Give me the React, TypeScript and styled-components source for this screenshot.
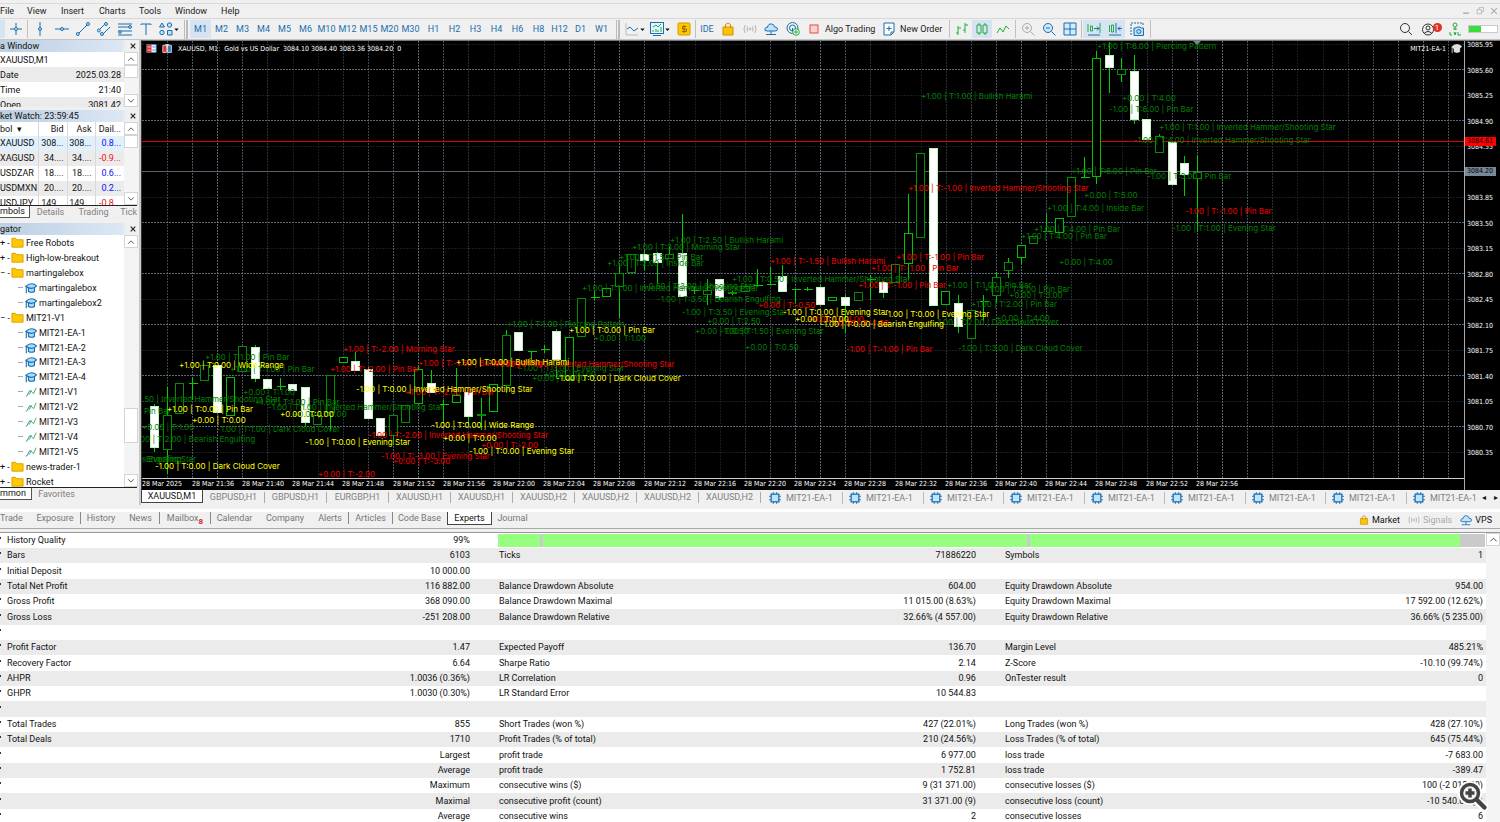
import React from "react";
import styled, { createGlobalStyle, css } from "styled-components";

const ui = `Roboto, "Noto Sans", sans-serif`;
const blue = "#1a6fae";
const green = "#1fae3a";

const Global = createGlobalStyle`
  * { box-sizing: border-box; }
  body { margin: 0; overflow: hidden; background: #f0f0f0; font-family: ${ui}; font-size: 9px; line-height: 12px; color: #111; }
  button { font: inherit; color: inherit; border: 0; padding: 0; margin: 0; background: none; white-space: nowrap; }
  svg { display: block; flex: none; }
`;

const Page = styled.div`display: flex; flex-direction: column; height: 100vh; overflow: hidden;`;
const TopStrip = styled.div`height: 4px; flex: none; border-bottom: 1px solid #dcdad8;`;
const MenuBar = styled.nav`display: flex; align-items: center; height: 15px; flex: none; border-bottom: 1px solid #d9d7d5;`;
const MenuItem = styled.button<{ $w: number }>`width: ${(p) => p.$w}px; flex: none; text-align: left; color: #222;`;
const Spacer = styled.div`flex: 1;`;
const WindowButtons = styled.div`display: flex; gap: 4px; padding-right: 1px;`;

const Toolbar = styled.div`display: flex; align-items: center; height: 21px; flex: none; border-bottom: 1px solid #c5c5c5; overflow: hidden;`;
const Tool = styled.button<{ $w: number; $on?: boolean }>`
  width: ${(p) => p.$w}px; height: 18px; flex: none; display: flex; align-items: center; justify-content: center; gap: 1px;
  color: ${blue}; ${(p) => p.$on && css`background: #d5e3f2;`}
`;
const WideTool = styled(Tool)`justify-content: flex-start; gap: 4px; padding-left: 4px; color: #222;`;
const Sep = styled.div`width: 1px; height: 18px; margin: 0 1px; background: #c0c0c0; flex: none;`;
const DoubleSep = styled.div`width: 4px; height: 19px; margin: 0 2px; border: solid #bbb; border-width: 0 2px 0 1px; flex: none;`;
const TimeGroup = styled.div`display: flex; margin-right: 2px; &:last-of-type { margin-right: 0; }`;
const Badge = styled.span`background: #e03020; color: #fff; border-radius: 5px; width: 9px; height: 9px; line-height: 9px; font-size: 8px; margin: -4px 0 0 -3px;`;
const Battery = styled.div`width: 30px; height: 8px; margin: 0 2px 0 3px; border: 1px solid #c9c9c9; background: linear-gradient(90deg, #3ddc3d 44%, #fff 44%);`;

const Main = styled.div`display: flex; height: 465px; flex: none;`;
const Side = styled.aside`width: 141px; flex: none; display: flex; flex-direction: column; overflow: hidden; border-right: 2px solid #c9c9c9;`;
const PanelTitle = styled.div`
  display: flex; align-items: center; justify-content: space-between; height: 12px; flex: none; padding-right: 2px;
  background: linear-gradient(90deg, #bccfe3, #dce7f4 122px, #f0f0f0 126px);
`;
const PanelBody = styled.div<{ $h: number }>`display: flex; height: ${(p) => p.$h}px; flex: none; overflow: hidden; background: #fff; margin-right: 1px;`;
const Content = styled.div`flex: 1; min-width: 0; overflow: hidden;`;
const Scroll = styled.div`width: 14px; flex: none; display: flex; flex-direction: column; justify-content: space-between; background: #f4f4f4;`;
const ScrollButton = styled.button`width: 14px; height: 13px; flex: none; border: 1px solid #d4d4d4; background: #fff; display: flex; align-items: center; justify-content: center;`;
const Thumb = styled.div<{ $h: number; $top: number }>`height: ${(p) => p.$h}px; margin-top: ${(p) => p.$top}px; margin-bottom: auto; background: #fff; border: 1px solid #d4d4d4;`;
const DataRow = styled.div`display: flex; justify-content: space-between; height: 15px; align-items: center; padding-right: 3px; &:nth-child(even) { background: #ebebeb; }`;
const Watch = styled.table`
  width: 124px; table-layout: fixed; border-collapse: collapse;
  th, td { height: 15px; padding: 0 3px 0 0; font-weight: normal; text-align: right; border-right: 1px solid #d9d9d9; white-space: nowrap; line-height: 11px; }
  th { height: 14px; }
  th:first-child, td:first-child { text-align: left; }
  tbody tr:nth-child(even) { background: #ebebeb; }
  tbody tr:first-child { background: #e0f0fd; }
  td:last-child, th:last-child { border-right: 0; }
`;
const Change = styled.td<{ $down?: boolean }>`color: ${(p) => (p.$down ? "#f01010" : "#1010f0")};`;
const SideTabs = styled.div`display: flex; height: 13px; flex: none; border-top: 1px solid #222; margin: 0 2px 5px 0; overflow: hidden;`;
const SideTab = styled.button<{ $w: number; $on?: boolean }>`
  width: ${(p) => p.$w}px; flex: none; color: #808080; line-height: 11px;
  ${(p) => p.$on && css`color: #111; background: #fff; border-right: 1px solid #555; border-bottom: 1px solid #555; text-align: left;`}
`;
const TreeRow = styled.div<{ $leaf?: boolean }>`
  display: flex; align-items: center; height: 15px; gap: 2px; white-space: nowrap;
  padding-left: ${(p) => (p.$leaf ? 18 : 0)}px; &:nth-child(9n) { height: 14px; }
`;
const Twist = styled.span`width: 9px; flex: none; white-space: nowrap; line-height: 10px;`;
const Dash = styled.span`width: 5px; border-top: 1px dashed #aaa; flex: none;`;

const ChartColumn = styled.section`flex: 1; min-width: 0; display: flex; flex-direction: column;`;
const ChartArea = styled.div`
  display: flex; height: 450px; flex: none; background: #000; border-top: 1px solid #777; border-left: 1px solid #333;
  color: #fff; font-size: 7px; font-family: "DejaVu Sans Condensed", "DejaVu Sans", sans-serif;
`;
const PlotColumn = styled.div`flex: 1; min-width: 0; display: flex; flex-direction: column; position: relative;`;
const Plot = styled.svg`width: 100%; height: 438px; border-bottom: 1px solid #ccc;`;
const PlotText = styled.text`font-family: Inter, "Liberation Sans", sans-serif; font-size: 8px;`;
const TimeAxis = styled.div`display: flex; height: 11px; overflow: hidden; line-height: 11px;`;
const TimeLabel = styled.span`width: 50px; flex: none; white-space: nowrap; &:nth-child(5n) { width: 51px; }`;
const ChartTitle = styled.div`position: absolute; left: 4px; right: 2px; top: 2px; display: flex; align-items: center; gap: 5px; white-space: nowrap; line-height: 10px;`;
const PriceAxis = styled.div`width: 36px; flex: none; position: relative; border-left: 1px solid #aaa;`;
const Prices = styled.div`height: 416px; display: flex; flex-direction: column; justify-content: space-between; line-height: 8px; padding-left: 2px;`;
const PriceTag = styled.div<{ $y: number; $c: string }>`position: absolute; left: 0; width: 31px; height: 9px; line-height: 9px; padding-left: 2px; color: #000; top: ${(p) => p.$y}px; background: ${(p) => p.$c};`;

const ChartTabs = styled.div`display: flex; height: 15px; flex: none; background: #f0f0f0; overflow: hidden; align-items: center;`;
const ChartTab = styled.button<{ $on?: boolean }>`
  width: 62px; height: 11px; line-height: 11px; flex: none; color: #808080; border-right: 1px solid #aaa;
  ${(p) => p.$on && css`height: 13px; margin-bottom: 2px; background: #fff; color: #111; border: 1px solid #444; border-top: 0;`}
`;
const EaTabs = styled.div`display: flex; flex: 1; min-width: 0; overflow: hidden; padding-left: 2px;`;
const EaTab = styled.button`width: 80px; height: 12px; flex: none; display: flex; align-items: center; gap: 5px; color: #808080; padding-left: 6px; border-right: 1px solid #bbb; &:nth-child(even) { width: 81px; }`;
const Arrows = styled.div`width: 20px; display: flex; justify-content: space-between; font-size: 8px; padding: 0 2px; flex: none;`;

const Gutter = styled.div`height: 7px; flex: none; border-bottom: 3px solid #fff;`;
const BoxTabs = styled.div`display: flex; height: 17px; flex: none; align-items: flex-start; border-bottom: 1px solid #aaa; margin-bottom: 3px;`;
const BoxTab = styled.button<{ $w: number; $on?: boolean; $line?: boolean }>`
  width: ${(p) => p.$w}px; flex: none; height: 12px; color: #777; border-right: 1px solid ${(p) => (p.$line ? "#888" : "transparent")};
  sub { color: #e02020; font-size: 8px; font-weight: bold; line-height: 0; }
  &:first-child { text-align: left; }
  ${(p) => p.$on && css`height: 13px; background: #fff; color: #111; border: 1px solid #444; border-top: 0;`}
`;
const Service = styled.button<{ $off?: boolean }>`display: flex; align-items: center; gap: 3px; height: 15px; margin-right: 8px; color: ${(p) => (p.$off ? "#aaa" : "#111")};`;
const Report = styled.div`flex: 1; min-height: 0; display: flex; overflow: hidden; border-top: 1px solid #999; background: #fff;`;
const ReportScroll = styled.div`width: 14px; flex: none; background: #f4f4f4;`;
const ReportBody = styled.div`flex: 1; min-width: 0;`;
const ReportTable = styled.table`
  width: 100%; table-layout: fixed; border-collapse: collapse;
  td { height: 15px; padding: 0; line-height: 13px; white-space: nowrap; }
  tr:nth-child(3n) td { height: 16px; }
  tr:nth-child(even) { background: #ebebeb; }
`;
const Name = styled.td`&& { padding-left: 19px; } &&:first-child { padding-left: 0; }`;
const Value = styled.td`&& { text-align: right; padding-right: 10px; } &&:last-child { padding-right: 3px; }`;
const Tick = styled.span`display: inline-block; width: 1px; height: 2px; margin: 0 6px 4px 0; background: #333;`;
const Quality = styled.div`display: flex; gap: 3px; height: 13px; margin: 0 1px 0 18px; background: #cacaca;`;
const QualityPart = styled.div<{ $grow: number; $empty?: boolean }>`flex: ${(p) => p.$grow} 0 0; background: ${(p) => (p.$empty ? "#cacaca" : "#96ff80")};`;
const Magnifier = styled.button`position: fixed; right: 12px; bottom: 11px;`;

/* Small line icons drawn on a 14px grid. */
const shapes: Record<string, React.ReactNode> = {
  cross: <><path d="M7 1v12M1 7h12" /><circle cx="7" cy="7" r="1.5" fill="#f0f0f0" /></>,
  vline: <><path d="M7 0v14" /><circle cx="7" cy="7" r="1.5" fill="#bfe0fb" /></>,
  hline: <><path d="M0 7h14" /><circle cx="7" cy="7" r="1.5" fill="#bfe0fb" /></>,
  trend: <><path d="M1 13 12 2" /><circle cx="1.8" cy="12" r="1.5" fill="#bfe0fb" /><circle cx="12" cy="2" r="1.5" fill="#bfe0fb" /></>,
  channel: <><path d="M1 9 9 1M5 13l8-8" /><circle cx="1.8" cy="8.5" r="1.5" fill="#bfe0fb" /><circle cx="9" cy="2" r="1.5" fill="#bfe0fb" /><circle cx="5" cy="12" r="1.5" fill="#bfe0fb" /></>,
  fibo: <><path d="M0 2h14M0 5h14M0 9h14M0 13h14" /><circle cx="12" cy="5" r="1.4" fill="#bfe0fb" /><circle cx="2" cy="10" r="1.4" fill="#bfe0fb" /></>,
  text: <path d="M2 3V2h10v1M7 2v11" />,
  shapes: <g fill="#bfe0fb"><path d="M3 1 5.500 5H.5Z" /><circle cx="10.500" cy="3" r="2.200" /><circle cx="3" cy="10.500" r="2.200" /><path d="M8.500 8.500h4.500v4.500H8.500z" /></g>,
  line: <><path d="M1 1v12h12" stroke="#bbb" /><path d="m2 7 3-2 4 4 4-3" /></>,
  indicator: <><rect x=".5" y=".5" width="13" height="11" fill="#e6f4ff" /><path d="M3 13.500h8" /><path d="m3 5 3-2 2 2 3-3M3 10V8M6 10V7M8 10V8M11 10V5" stroke={green} /></>,
  dollar: <><rect x="1" y="1" width="12" height="12" rx="1" fill="#ffc800" stroke="#d79a00" /><path d="M9.500 4.500h-4v2.500h4V9.500h-4.500M7 3v8" stroke="#9a6500" /></>,
  bag: <><path d="M2 5h10v8H2z" fill="#ffc400" stroke="#d09000" /><path d="M4.500 6V2.500q2.500-3 5 0V6" stroke="#c98a00" /></>,
  signal: <g stroke="#b5b5b5"><path d="M2 3q-2 4 0 8M4.500 4.500q-1 2.500 0 5M12 3q2 4 0 8M9.500 4.500q1 2.500 0 5" /><circle cx="7" cy="7" r="1" /></g>,
  cloud: <><path d="M3 9Q0 9 1 6.500 2 5 3.500 5.500 4 1.500 7.500 2 10 2 10.500 5q3 0 3 2T11 9Z" fill="#bfe4ff" /><path d="M7 9v3M2 12.500h10" /></>,
  globe: <><circle cx="6.500" cy="6" r="5.500" /><circle cx="6.500" cy="6" r="3" /><path d="M6.500 6v4" /><circle cx="10" cy="10" r="3.300" fill="#fff" stroke={green} /><path d="M10 8v4M8 10h4" stroke={green} /></>,
  stop: <rect x="3" y="3" width="8" height="8" fill="#ffd0cc" stroke="#d9534a" />,
  order: <><path d="M2 1h10v9l-3 3H2Z" fill="#fff" /><path d="M7 4v5M4.500 6.500h5M9 13v-3h3" /></>,
  bars: <path d="M3 4v9M1 11h2M3 6h3M10 1v10M8 8h2M10 3h3" stroke={green} />,
  candles: <path d="M2 3h4v8H2zM8 3h4v8H8zM4 1v2M4 11v2M10 1v2M10 11v2" stroke={green} />,
  zigzag: <path d="m1 11 3-5 3 4 3-6 3 3" stroke={green} />,
  zoomIn: <g stroke="#aaa"><circle cx="6" cy="6" r="4.500" /><path d="M9.500 9.500 13.500 13.500M4 6h4M6 4v4" /></g>,
  zoomOut: <><circle cx="6" cy="6" r="4.500" fill="#cfe8ff" /><path d="M9.500 9.500 13.500 13.500M4 6h4" /></>,
  tiles: <path d="M1 1h12v12H1zM7 1v12M1 7h12" fill="#d5ecff" />,
  shift: <><path d="M1 2v8M3.500 4v5h2V4h-2M13 1v10" stroke={green} /><path d="M7 6.500h5M10 4.500l2 2-2 2M1 13h12" /></>,
  scroll: <><path d="M1.500 3v7M3.500 3v7h2V3h-2" stroke={green} /><path d="M8 1v10M14 6.500h-4M12 4.500l-2 2 2 2M1 13h12" /></>,
  camera: <><path d="M1 13V1h12v3" strokeDasharray="2 1" /><path d="M4 6h2l1-1h3l1 1h2.500v7.500H4z" fill="#bfe0fb" /><circle cx="8.800" cy="9.500" r="2" /></>,
  search: <g stroke="#333"><circle cx="6" cy="6" r="4.500" /><path d="M9.500 9.500 13 13" /></g>,
  user: <g stroke="#333"><circle cx="7" cy="7.500" r="5.500" /><circle cx="7" cy="6" r="2" /><path d="M3 11.500q4-4 8 0" /></g>,
  level: <g stroke={green}><circle cx="7" cy="3" r="2" /><path d="M7 5v3M5 7h4M2 10v3h2M6 10l1 3 1-3M10 10v3h3" /></g>,
  folder: <path d="M1 2.500h4l1 1.500h7v8H1z" fill="#ffc800" stroke="#dba000" />,
  hat: <><path d="M4 6v5q4 2 7 0V6" fill="#a9dbff" strokeWidth="1.300" /><path d="M1 5q3-3 6.500-3T13.500 4.500Q11 7.500 7.500 7.500T1 5Z" fill="#a9dbff" strokeWidth="1.300" /><path d="M1.500 5v8" strokeWidth="1.300" /></>,
  hatWhite: <><path d="M4 6v5q4 2 7 0V6" fill="#ddd" stroke="#eee" /><path d="M1 5q3-3 6.500-3T13.500 4.500Q11 7.500 7.500 7.500T1 5Z" fill="#ddd" stroke="#eee" /><path d="M1.500 5v8" stroke="#ddd" /></>,
  wave: <><path d="M1 12q2 0 3-4t4-2" /><path d="m5 10 2-4 3 3 3-7" stroke={green} /></>,
  chip: <><path d="M5 0v14M9 0v14M0 5h14M0 9h14" /><rect x="2.500" y="2.500" width="9" height="9" fill="#bfe4ff" strokeWidth="1.500" /></>,
  book: <><path d="M1 2h12v10H1z" fill="#fff" stroke="#3b7fc4" /><path d="M1 2h6v10H1z" fill="#d33" stroke="none" /><path d="M2 5h4M2 9h4" stroke="#fff" /><path d="M8 5h4M8 9h4" /></>,
  pad: <><path d="M1 3h5v9H1z" fill="#d33" stroke="#eee" /><path d="M7 3h5v9H7z" fill="#3b7fc4" stroke="#eee" /><path d="M4 2h5M6.500 2v4" stroke="#fff" /></>,
  min: <path d="M3 10h8" stroke="#aaa" strokeWidth="2" />,
  restore: <path d="M3 5h6v6H3zM6 5V2h6v6H9" stroke="#aaa" />,
  close: <path d="m3 3 8 8M11 3l-8 8" stroke="#aaa" strokeWidth="1.500" />,
  x: <path d="m3 3 8 8M11 3l-8 8" stroke="#222" strokeWidth="2" />,
  up: <path d="m2 10 5-5 5 5" stroke="#444" strokeWidth="1.500" />,
  down: <path d="m2 4 5 5 5-5" stroke="#444" strokeWidth="1.500" />,
  caret: <path d="M1 4h12L7 11Z" fill="#111" stroke="none" />,
};
const Icon = ({ n, s = 14 }: { n: string; s?: number }) => (
  <svg width={s} height={s} viewBox="0 0 14 14" fill="none" stroke={blue} strokeWidth="1" aria-hidden="true">{shapes[n]}</svg>
);

const FIRST = 154.7;
const STEP = 12.56;
/* body top, body bottom, wick top, wick bottom, 1 when the body is filled */
const candles: number[][] = [
  [406, 448, 404, 452, 1], [415, 450, 387, 474, 0], [383, 414, 383, 414, 0], [383, 383, 377, 400, 0], [365, 381, 365, 381, 0],
  [365, 413, 365, 413, 1], [377, 416, 377, 416, 0], [346, 372, 346, 372, 0], [347, 379, 345, 382, 1], [379, 389, 379, 389, 1],
  [386, 386, 378, 390, 0], [384, 391, 384, 391, 1], [387, 423, 387, 426, 1], [415, 425, 415, 425, 0], [375, 413, 375, 430, 0],
  [357, 363, 357, 363, 0], [361, 371, 352, 371, 1], [369, 419, 367, 419, 1], [418, 436, 418, 436, 1], [415, 436, 415, 445, 0],
  [405, 423, 405, 423, 0], [369, 404, 365, 404, 0], [383, 393, 370, 393, 1], [404, 404, 400, 423, 0], [395, 403, 368, 403, 0],
  [392, 417, 392, 425, 1], [414, 416, 398, 430, 0], [384, 412, 384, 412, 0], [335, 386, 330, 393, 0], [332, 351, 332, 351, 1],
  [351, 351, 351, 363, 0], [349, 349, 345, 353, 0], [331, 360, 329, 378, 1], [337, 380, 337, 380, 0], [298, 337, 298, 337, 0],
  [297, 297, 290, 300, 0], [288, 297, 288, 297, 0], [273, 287, 265, 317, 0], [254, 273, 254, 273, 0], [254, 261, 250, 270, 1],
  [253, 263, 252, 283, 1], [254, 259, 246, 259, 0], [253, 297, 214, 297, 1], [290, 290, 287, 294, 0], [290, 295, 279, 305, 0],
  [279, 298, 279, 300, 1], [292, 294, 291, 295, 0], [286, 292, 286, 292, 0], [285, 285, 269, 285, 0], [284, 284, 267, 284, 0],
  [276, 292, 265, 292, 1], [289, 289, 289, 303, 0], [289, 289, 287, 291, 0], [287, 305, 285, 305, 1], [297, 301, 297, 301, 0],
  [297, 306, 295, 333, 1], [292, 301, 292, 301, 0], [279, 279, 275, 300, 0], [282, 293, 281, 298, 1], [264, 283, 264, 283, 0],
  [233, 264, 194, 280, 0], [153, 238, 153, 238, 0], [148, 306, 148, 306, 1], [291, 305, 291, 305, 0], [303, 327, 295, 333, 1],
  [310, 339, 310, 339, 0], [301, 301, 295, 321, 0], [277, 296, 272, 302, 0], [262, 271, 258, 278, 0], [245, 258, 245, 264, 0],
  [236, 244, 236, 244, 0], [231, 231, 214, 231, 0], [218, 233, 218, 233, 0], [177, 217, 177, 217, 0], [177, 177, 157, 177, 0],
  [58, 177, 51, 184, 0], [55, 68, 42, 93, 1], [69, 75, 58, 82, 0], [71, 120, 55, 124, 1], [119, 140, 119, 140, 1],
  [136, 153, 134, 153, 0], [142, 185, 142, 185, 1], [163, 175, 156, 196, 1], [172, 179, 155, 232, 0],
];

const G = "#008000", R = "#f00000", Y = "#ffff00";
const IH = "Inverted Hammer/Shooting Star";
const notes: [number, number, string, string][] = [
  [1097, 46, G, "+1.00 | T:6.00 | Piercing Pattern"], [921, 96, G, "+1.00 | T:1.00 | Bullish Harami"], [1122, 98, G, "+0.00 | T:4.00"],
  [1109, 109, G, "-1.00 | T:6.00 | Pin Bar"], [1159, 127, G, "+1.00 | T:1.00 | " + IH], [1134, 140, G, "-1.00 | T:4.00 | " + IH],
  [1071, 171, G, "+1.00 | T:6.00 | Pin Bar"], [1147, 176, G, "-1.00 | T:3.00 | Pin Bar"], [1084, 195, G, "+0.00 | T:5.00"],
  [1047, 208, G, "+1.00 | T:4.00 | Inside Bar"], [1172, 228, G, "-1.00 | T:1.00 | Evening Star"], [1034, 229, G, "+1.00 | T:4.00 | Pin Bar"],
  [1021, 236, G, "+1.00 | T:4.00 | Pin Bar"], [1059, 262, G, "+0.00 | T:4.00"], [947, 285, G, "+1.00 | T:1.00 | Pin Bar"],
  [984, 289, G, "+1.00 | T:3.00 | Pin Bar"], [1009, 295, G, "+0.00 | T:3.00"], [971, 304, G, "+1.00 | T:2.00 | Pin Bar"],
  [996, 318, G, "+0.00 | T:4.00"], [934, 322, G, "-1.00 | T:2.00 | Dark Cloud Cover"], [958, 348, G, "-1.00 | T:3.00 | Dark Cloud Cover"],
  [670, 240, G, "+1.00 | T:2.50 | Bullish Harami"], [632, 247, G, "+1.00 | T:3.00 | Morning Star"], [619, 257, G, "+1.00 | T:1.50 | Pin Bar"],
  [607, 263, G, "+1.00 | T:2.00 | Inside Bar"], [582, 288, G, "+1.00 | T:1.00 | " + IH], [645, 286, G, "-0.50 | T:3.00 | Shooting Star"],
  [732, 279, G, "+1.00 | T:0.50 | " + IH], [657, 299, G, "-1.00 | T:3.50 | Bearish Engulfing"], [682, 312, G, "-1.00 | T:3.50 | Evening Star"],
  [707, 321, G, "+0.00 | T:2.50"], [695, 331, G, "+0.00 | T:0.50"], [720, 331, G, "-1.00 | T:1.50 | Evening Star"],
  [745, 347, G, "+0.00 | T:0.50"], [507, 324, G, "+1.00 | T:1.00 | Piercing Pattern"], [594, 338, G, "+0.00 | T:1.00"],
  [519, 368, G, "-1.00 | T:3.00 | Evening Star"], [544, 374, G, "+0.00 | T:1.00"], [532, 378, G, "+0.00 | T:2.00"],
  [205, 357, G, "+1.00 | T:1.00 | Pin Bar"], [230, 369, G, "+1.00 | T:1.00 | Pin Bar"], [243, 392, G, "+0.00 | T:1.00"],
  [255, 402, G, "+1.00 | T:1.00 | Pin Bar"], [142, 399, G, ".50 | " + IH], [268, 407, G, "-1.00 | T:1.00 | " + IH],
  [293, 414, G, "+0.00 | T:0.00"], [144, 411, G, "Pin Bar"], [142, 427, G, "+0.00 | T:1.00"], [217, 429, G, "-1.00 | T:1.00 | Dark Cloud Cover"],
  [131, 439, G, "-1.00 | T:2.00 | Bearish Engulfing"], [142, 459, G, "s Evening Star"], [146, 459, G, "Engulfing"],
  [908, 188, R, "+1.00 | T:-1.00 | " + IH], [1185, 211, R, "-1.00 | T:-1.00 | Pin Bar"], [896, 257, R, "+1.00 | T:-1.00 | Pin Bar"],
  [871, 268, R, "+1.00 | T:-1.00 | Pin Bar"], [858, 285, R, "+1.00 | T:-1.00 | Pin Bar"], [770, 261, R, "+1.00 | T:-1.50 | Bullish Harami"],
  [758, 305, R, "+0.00 | T:-0.50"], [846, 349, R, "-1.00 | T:-1.00 | Pin Bar"], [343, 349, R, "+1.00 | T:-2.00 | Morning Star"],
  [330, 369, R, "+1.00 | T:-2.00 | Pin Bar"], [418, 363, R, "+1.00 | T:-1.50 | Bullish Engulfing"], [494, 364, R, "+1.00 | T:-1.00 | " + IH],
  [405, 392, R, "+1.00 | T:-2.00 | Pin Bar"], [368, 435, R, "-1.00 | T:-2.00 | " + IH], [381, 456, R, "-1.00 | T:-3.00 | Evening Star"],
  [393, 461, R, "+0.00 | T:-3.00"], [481, 445, R, "+0.00 | T:-2.00"], [318, 474, R, "+0.00 | T:-2.00"], [808, 319, R, "+0.00 | T:-1.00"], [833, 323, R, "+0.00 | T:-1.00"],
  [179, 365, Y, "+1.00 | T:0.00 | Wide Range"], [167, 409, Y, "+1.00 | T:0.00 | Pin Bar"], [192, 420, Y, "+0.00 | T:0.00"],
  [280, 414, Y, "+0.00 | T:0.00"], [155, 466, Y, "-1.00 | T:0.00 | Dark Cloud Cover"], [305, 442, Y, "-1.00 | T:0.00 | Evening Star"],
  [356, 389, Y, "-1.00 | T:0.00 | " + IH], [456, 362, Y, "+1.00 | T:0.00 | Bullish Harami"], [431, 425, Y, "-1.00 | T:0.00 | Wide Range"],
  [443, 438, Y, "+0.00 | T:0.00"], [469, 451, Y, "-1.00 | T:0.00 | Evening Star"], [569, 330, Y, "+1.00 | T:0.00 | Pin Bar"],
  [556, 378, Y, "-1.00 | T:0.00 | Dark Cloud Cover"], [783, 312, Y, "-1.00 | T:0.00 | Evening Star"], [795, 319, Y, "+0.00 | T:0.00"],
  [820, 324, Y, "-1.00 | T:0.00 | Bearish Engulfing"], [884, 314, Y, "-1.00 | T:0.00 | Evening Star"],
];
const fade = [0.5, 0.65, 0.75, 0.6, 0.35, 0.2, 0.2, 0.35];

function PricePlot() {
  return (
    <Plot role="img" aria-label="Gold vs US Dollar candles">
      <g transform="translate(-142 -41)">
        <g stroke="#778899" strokeDasharray="2 1" shapeRendering="crispEdges">
          {Array.from({ length: 52 }, (_, i) => <path key={i} d={`M${Math.round(167 + i * 25.12) + 0.5} 41V480`} opacity={fade[i % 8]} />)}
          {Array.from({ length: 17 }, (_, i) => <path key={i} d={`M142 ${Math.round(43.5 + i * 25.5) + 0.5}H1466`} opacity={i % 2 ? 0.75 : 0.2} />)}
        </g>
        <path d="M142 141.500H1466" stroke="#e00000" />
        <path d="M142 171.500H1466" stroke="#56606c" />
        <path d="M1193 41h8l-4 4z" fill="#778899" />
        <g stroke="#00d000" shapeRendering="crispEdges">
          {candles.map(([a, b, w, v, f], i) => {
            const x = Math.round(FIRST + i * STEP - 0.5) + 0.5;
            return (
              <g key={i}>
                <path d={`M${x} ${w}V${a}M${x} ${b}V${v}`} />
                {b - a < 2 ? <path d={`M${x - 4} ${a + 0.5}h9`} /> : <rect x={x - 4} y={a + 0.5} width="8" height={b - a - 1} fill={f ? "#fff" : "#000"} stroke={f ? "#b8f5b8" : i % 3 ? "#009000" : "#00c000"} />}
              </g>
            );
          })}
        </g>
        {notes.map(([x, y, c, t], i) => <PlotText key={i} x={x} y={y + 3} fill={c}>{t}</PlotText>)}
      </g>
    </Plot>
  );
}

const times = ["2025", ...Array.from({ length: 21 }, (_, i) => { const m = 36 + i * 4; return `${m < 60 ? 21 : 22}:${String(m % 60).padStart(2, "0")}`; })];
const prices = Array.from({ length: 17 }, (_, i) => (3085.95 - i * 0.35).toFixed(2));

const left: [string, number][] = [["vline", 22], ["hline", 21], ["trend", 21], ["channel", 21], ["fibo", 22], ["text", 19]];
const minutes = ["M1", "M2", "M3", "M4", "M5", "M6", "M10", "M12", "M15", "M20", "M30"];
const hours = ["H1", "H2", "H3", "H4", "H6", "H8", "H12", "D1", "W1"];
const menus: [string, number][] = [["File", 27], ["View", 34], ["Insert", 38], ["Charts", 40], ["Tools", 36], ["Window", 46], ["Help", 30]];
const watch: [string, string, string, string, boolean][] = [
  ["XAUUSD", "308...", "308...", "0.8...", false], ["XAGUSD", "34....", "34....", "-0.9...", true], ["USDZAR", "18....", "18....", "0.6...", false],
  ["USDMXN", "20....", "20....", "0.2...", false], ["USDJPY", "149...", "149...", "-0.8...", true],
];
const tree: [string, string][] = [
  ["+", "Free Robots"], ["+", "High-low-breakout"], ["−", "martingalebox"], ["hat", "martingalebox"], ["hat", "martingalebox2"], ["−", "MIT21-V1"],
  ["hat", "MIT21-EA-1"], ["hat", "MIT21-EA-2"], ["hat", "MIT21-EA-3"], ["hat", "MIT21-EA-4"],
  ["wave", "MIT21-V1"], ["wave", "MIT21-V2"], ["wave", "MIT21-V3"], ["wave", "MIT21-V4"], ["wave", "MIT21-V5"], ["+", "news-trader-1"], ["+", "Rocket"],
];
const symbols = ["GBPUSD,H1", "GBPUSD,H1", "EURGBP,H1", "XAUUSD,H1", "XAUUSD,H1", "XAUUSD,H2", "XAUUSD,H2", "XAUUSD,H2", "XAUUSD,H2"];
const boxTabs: [string, number, boolean][] = [
  ["Trade", 30, false], ["Exposure", 51, true], ["History", 41, false], ["News", 38, true], ["Mailbox", 51, true], ["Calendar", 48, false],
  ["Company", 53, false], ["Alerts", 37, true], ["Articles", 44, true], ["Code Base", 54, false], ["Experts", 45, false], ["Journal", 42, false],
];
const report: string[][] = [
  ["Bars", "6103", "Ticks", "71886220", "Symbols", "1"],
  ["Initial Deposit", "10 000.00", "", "", "", ""],
  ["Total Net Profit", "116 882.00", "Balance Drawdown Absolute", "604.00", "Equity Drawdown Absolute", "954.00"],
  ["Gross Profit", "368 090.00", "Balance Drawdown Maximal", "11 015.00 (8.63%)", "Equity Drawdown Maximal", "17 592.00 (12.62%)"],
  ["Gross Loss", "-251 208.00", "Balance Drawdown Relative", "32.66% (4 557.00)", "Equity Drawdown Relative", "36.66% (5 235.00)"],
  ["", "", "", "", "", ""],
  ["Profit Factor", "1.47", "Expected Payoff", "136.70", "Margin Level", "485.21%"],
  ["Recovery Factor", "6.64", "Sharpe Ratio", "2.14", "Z-Score", "-10.10 (99.74%)"],
  ["AHPR", "1.0036 (0.36%)", "LR Correlation", "0.96", "OnTester result", "0"],
  ["GHPR", "1.0030 (0.30%)", "LR Standard Error", "10 544.83", "", ""],
  ["", "", "", "", "", ""],
  ["Total Trades", "855", "Short Trades (won %)", "427 (22.01%)", "Long Trades (won %)", "428 (27.10%)"],
  ["Total Deals", "1710", "Profit Trades (% of total)", "210 (24.56%)", "Loss Trades (% of total)", "645 (75.44%)"],
  ["", "Largest", "profit trade", "6 977.00", "loss trade", "-7 683.00"],
  ["", "Average", "profit trade", "1 752.81", "loss trade", "-389.47"],
  ["", "Maximum", "consecutive wins ($)", "9 (31 371.00)", "consecutive losses ($)", "100 (-2 015.00)"],
  ["", "Maximal", "consecutive profit (count)", "31 371.00 (9)", "consecutive loss (count)", "-10 540.00 (8)"],
  ["", "Average", "consecutive wins", "2", "consecutive losses", "6"],
];
const columns = ["14%", "18.3%", "17.05%", "17%", "17%", "16.65%"];

const IconTool = ({ n, w, on, label, caret }: { n: string; w: number; on?: boolean; label?: string; caret?: boolean }) => (
  <Tool $w={w} $on={on} aria-label={label ?? n}><Icon n={n} />{caret && <Icon n="caret" s={5} />}</Tool>
);
const Title = ({ children }: { children: React.ReactNode }) => <PanelTitle><span>{children}</span><button aria-label="Close panel"><Icon n="x" s={8} /></button></PanelTitle>;
const ScrollBar = ({ h, top = 0 }: { h: number; top?: number }) => (
  <Scroll><ScrollButton aria-label="Scroll up"><Icon n="up" s={8} /></ScrollButton><Thumb $h={h} $top={top} /><ScrollButton aria-label="Scroll down"><Icon n="down" s={8} /></ScrollButton></Scroll>
);

export default function App() {
  return (
    <Page>
      <Global />
      <TopStrip />
      <MenuBar>
        {menus.map(([m, w]) => <MenuItem key={m} $w={w}>{m}</MenuItem>)}
        <Spacer />
        <WindowButtons>{["min", "restore", "close"].map((n) => <button key={n} aria-label={n}><Icon n={n} s={10} /></button>)}</WindowButtons>
      </MenuBar>
      <Toolbar>
        <Tool $w={5} $on aria-label="Cursor" />
        <IconTool n="cross" w={21} />
        <Sep />
        {left.map(([n, w]) => <IconTool key={n} n={n} w={w} />)}
        <IconTool n="shapes" w={27} caret />
        <DoubleSep />
        <TimeGroup>{minutes.map((m, i) => <Tool key={m} $w={21} $on={i === 0}>{m}</Tool>)}</TimeGroup>
        <TimeGroup>{hours.map((m) => <Tool key={m} $w={21}>{m}</Tool>)}</TimeGroup>
        <DoubleSep />
        <IconTool n="line" w={25} caret />
        <IconTool n="indicator" w={26} caret />
        <IconTool n="dollar" w={21} />
        <Sep />
        <Tool $w={20}>IDE</Tool>
        <IconTool n="bag" w={22} />
        <IconTool n="signal" w={21} />
        <IconTool n="cloud" w={22} />
        <IconTool n="globe" w={21} />
        <WideTool $w={75}><Icon n="stop" />Algo Trading</WideTool>
        <WideTool $w={70}><Icon n="order" />New Order</WideTool>
        <Sep />
        <IconTool n="bars" w={21} />
        <IconTool n="candles" w={20} on />
        <IconTool n="zigzag" w={22} />
        <Sep />
        <IconTool n="zoomIn" w={21} />
        <IconTool n="zoomOut" w={21} />
        <IconTool n="tiles" w={21} />
        <Sep />
        <IconTool n="shift" w={21} on />
        <IconTool n="scroll" w={21} on />
        <IconTool n="camera" w={24} />
        <Sep />
        <Spacer />
        <IconTool n="search" w={22} />
        <Tool $w={28} aria-label="Account"><Icon n="user" /><Badge>1</Badge></Tool>
        <IconTool n="level" w={20} />
        <Battery />
      </Toolbar>

      <Main>
        <Side>
          <Title>a Window</Title>
          <PanelBody $h={55}>
            <Content>
              <DataRow>XAUUSD,M1</DataRow>
              <DataRow><span>Date</span><span>2025.03.28</span></DataRow>
              <DataRow><span>Time</span><span>21:40</span></DataRow>
              <DataRow><span>Open</span><span>3081.42</span></DataRow>
            </Content>
            <ScrollBar h={13} />
          </PanelBody>
          <Spacer />
          <Title>ket Watch: 23:59:45</Title>
          <PanelBody $h={83}>
            <Content>
              <Watch>
                <colgroup><col width="38" /><col width="29" /><col width="28" /><col width="29" /></colgroup>
                <thead><tr><th>bol &nbsp;▾</th><th>Bid</th><th>Ask</th><th>Dail...</th></tr></thead>
                <tbody>{watch.map(([s, b, a, d, down]) => <tr key={s}><td>{s}</td><td>{b}</td><td>{a}</td><Change $down={down}>{d}</Change></tr>)}</tbody>
              </Watch>
            </Content>
            <ScrollBar h={13} />
          </PanelBody>
          <SideTabs><SideTab $w={30} $on>mbols</SideTab><SideTab $w={41}>Details</SideTab><SideTab $w={45}>Trading</SideTab><SideTab $w={30}>Ticks</SideTab></SideTabs>
          <Title>gator</Title>
          <PanelBody $h={252}>
            <Content>
              {tree.map(([k, t], i) => k.length > 1
                ? <TreeRow key={i} $leaf><Dash /><Icon n={k} s={12} />{t}</TreeRow>
                : <TreeRow key={i}><Twist>{k} -</Twist><Icon n="folder" s={13} />{t}</TreeRow>)}
            </Content>
            <ScrollBar h={35} top={160} />
          </PanelBody>
          <SideTabs><SideTab $w={32} $on>mmon</SideTab><SideTab $w={49}>Favorites</SideTab></SideTabs>
        </Side>

        <ChartColumn>
          <ChartArea>
            <PlotColumn>
              <PricePlot />
              <TimeAxis>{times.map((t) => <TimeLabel key={t}>28 Mar {t}</TimeLabel>)}</TimeAxis>
              <ChartTitle><Icon n="book" s={11} /><Icon n="pad" s={11} /><span>XAUUSD, M1:&nbsp; Gold vs US Dollar&nbsp; 3084.10 3084.40 3083.36 3084.20&nbsp; 0</span><Spacer /><span>MIT21-EA-1</span><Icon n="hatWhite" s={11} /></ChartTitle>
            </PlotColumn>
            <PriceAxis>
              <Prices>{prices.map((p) => <span key={p}>{p}</span>)}</Prices>
              <PriceTag $y={96} $c="#ff0000">3084.61</PriceTag>
              <PriceTag $y={126} $c="#778899">3084.20</PriceTag>
            </PriceAxis>
          </ChartArea>
          <ChartTabs>
            <ChartTab $on>XAUUSD,M1</ChartTab>
            {symbols.map((s, i) => <ChartTab key={i}>{s}</ChartTab>)}
            <EaTabs>{Array.from({ length: 9 }, (_, i) => <EaTab key={i}><Icon n="chip" s={12} />MIT21-EA-1</EaTab>)}</EaTabs>
            <Arrows><span>◂</span><span>▸</span></Arrows>
          </ChartTabs>
        </ChartColumn>
      </Main>

      <Gutter />
      <BoxTabs>
        {boxTabs.map(([t, w, line]) => <BoxTab key={t} $w={w} $line={line} $on={t === "Experts"}>{t}{t === "Mailbox" && <sub>8</sub>}</BoxTab>)}
        <Spacer />
        <Service><Icon n="bag" s={10} />Market</Service>
        <Service $off><Icon n="signal" s={12} />Signals</Service>
        <Service><Icon n="cloud" s={12} />VPS</Service>
      </BoxTabs>
      <Report>
        <ReportBody>
          <ReportTable>
            <colgroup>{columns.map((w, i) => <col key={i} width={w} />)}</colgroup>
            <tbody>
              <tr>
                <Name><Tick />History Quality</Name><Value>99%</Value>
                <td colSpan={4}><Quality><QualityPart $grow={42} /><QualityPart $grow={485} /><QualityPart $grow={430} /><QualityPart $grow={22} $empty /></Quality></td>
              </tr>
              {report.map((r, i) => (
                <tr key={i}>{r.map((c, j) => j % 2 ? <Value key={j}>{c}</Value> : <Name key={j}>{j === 0 && <Tick />}{c}</Name>)}</tr>
              ))}
            </tbody>
          </ReportTable>
        </ReportBody>
        <ReportScroll><ScrollButton aria-label="Scroll up"><Icon n="up" s={9} /></ScrollButton></ReportScroll>
      </Report>
      <Magnifier aria-label="Enlarge">
        <svg width="30" height="30" viewBox="0 0 30 30" fill="none">
          <path d="m20 20 6.500 6.500" stroke="#fff" strokeWidth="8" strokeLinecap="round" />
          <circle cx="12" cy="12" r="9" fill="#fff" stroke="#fff" strokeWidth="6" />
          <circle cx="12" cy="12" r="8.500" fill="#f4f4f4" stroke="#444" strokeWidth="3.500" />
          <path d="M12 7.500v9M7.500 12h9" stroke="#444" strokeWidth="3.500" />
          <path d="m19 19 7.500 7.500" stroke="#444" strokeWidth="4.500" strokeLinecap="round" />
        </svg>
      </Magnifier>
    </Page>
  );
}
